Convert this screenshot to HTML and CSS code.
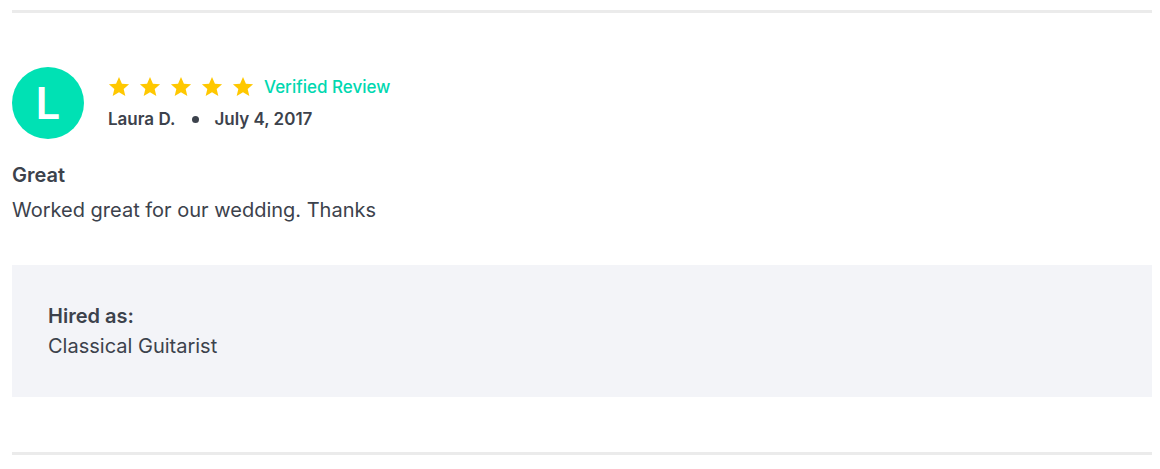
FILE: index.html
```html
<!DOCTYPE html>
<html>
<head>
<meta charset="utf-8">
<link rel="stylesheet" href="styles.css">
</head>
<body>
<div class="page">
  <div class="rule"></div>
  <div class="review">
    <div class="head">
      <div class="avatar">L</div>
      <div class="meta">
        <div class="rating">
          <span class="stars">
            <svg class="star" viewBox="0 0 24 24"><path d="M12 1.2l3.2 7.2 7.8.6-5.9 5.1 1.8 7.7L12 17.8l-6.9 4 1.8-7.7L1 9l7.8-.6z"/></svg>
            <svg class="star" viewBox="0 0 24 24"><path d="M12 1.2l3.2 7.2 7.8.6-5.9 5.1 1.8 7.7L12 17.8l-6.9 4 1.8-7.7L1 9l7.8-.6z"/></svg>
            <svg class="star" viewBox="0 0 24 24"><path d="M12 1.2l3.2 7.2 7.8.6-5.9 5.1 1.8 7.7L12 17.8l-6.9 4 1.8-7.7L1 9l7.8-.6z"/></svg>
            <svg class="star" viewBox="0 0 24 24"><path d="M12 1.2l3.2 7.2 7.8.6-5.9 5.1 1.8 7.7L12 17.8l-6.9 4 1.8-7.7L1 9l7.8-.6z"/></svg>
            <svg class="star" viewBox="0 0 24 24"><path d="M12 1.2l3.2 7.2 7.8.6-5.9 5.1 1.8 7.7L12 17.8l-6.9 4 1.8-7.7L1 9l7.8-.6z"/></svg>
          </span>
          <span class="verified">Verified Review</span>
        </div>
        <div class="byline">
          <span class="name">Laura D.</span>
          <span class="dot"></span>
          <span class="date">July 4, 2017</span>
        </div>
      </div>
    </div>
    <h3 class="title">Great</h3>
    <p class="body">Worked great for our wedding. Thanks</p>
    <div class="hired">
      <div class="hired-label">Hired as:</div>
      <div class="hired-value">Classical Guitarist</div>
    </div>
  </div>
  <div class="rule"></div>
</div>
</body>
</html>
```

FILE: styles.css
```css
html, body {
  margin: 0;
  padding: 0;
  background: #ffffff;
}
body {
  font-family: "Inter", "Noto Sans", sans-serif;
  color: #3c424c;
}
.page {
  padding: 10px 8px 0 12px;
}
.rule {
  height: 3px;
  background: #ebebeb;
}
.review {
  padding: 54px 0 55px;
}
.head {
  display: flex;
  align-items: flex-start;
  gap: 24px;
}
.avatar {
  width: 72px;
  height: 72px;
  border-radius: 50%;
  background: #00e1b4;
  color: #ffffff;
  font-size: 44px;
  font-weight: 600;
  line-height: 72px;
  text-align: center;
  flex: none;
}
.meta {
  display: flex;
  flex-direction: column;
  gap: 11px;
  padding-top: 9px;
}
.rating {
  display: flex;
  align-items: center;
  gap: 10px;
  height: 22px;
}
.stars {
  display: flex;
  gap: 9px;
}
.star {
  width: 22px;
  height: 22px;
  fill: #ffc800;
}
.verified {
  color: #00d8b0;
  font-size: 17px;
  font-weight: 500;
}
.byline {
  display: flex;
  align-items: center;
  font-size: 17px;
  font-weight: 600;
  line-height: 20px;
}
.dot {
  width: 7px;
  height: 7px;
  border-radius: 50%;
  background: #3c424c;
  margin: 0 15px 0 17px;
}
.title {
  margin: 24px 0 0;
  font-size: 20px;
  font-weight: 600;
  line-height: 24px;
}
.body {
  margin: 11px 0 0;
  font-size: 20px;
  line-height: 24px;
}
.hired {
  margin-top: 43px;
  background: #f3f4f8;
  padding: 36px 36px 36px;
  font-size: 20px;
  line-height: 30px;
}
.hired-label {
  font-weight: 600;
}
```
